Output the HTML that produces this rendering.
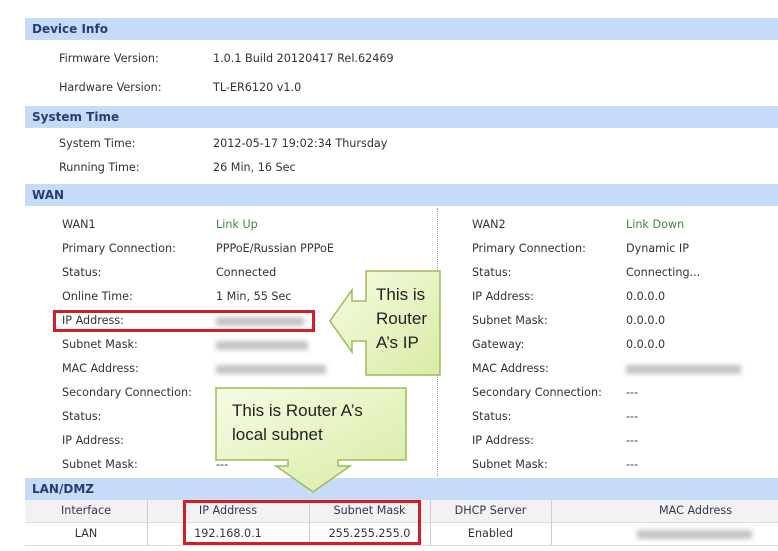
<!DOCTYPE html><html><head><style>
body{margin:0;width:778px;height:551px;background:#fff;position:relative;overflow:hidden;font-family:"DejaVu Sans","Liberation Sans",sans-serif;font-size:11.2px;color:#333}
.b{position:absolute;left:25px;width:753px;height:22px;background:#c6dbf7}
.b span{position:absolute;left:7px;top:4px;font-weight:bold;color:#243e73;font-size:12px}
.t{position:absolute;white-space:nowrap;line-height:14px}
.g{color:#3c8a3c}
.bl{position:absolute;height:9px;background:#c4c4c4;filter:blur(2.5px)}
.rb{position:absolute;border:3px solid #d21f26}
</style></head><body>
<div class="b" style="top:18px"><span>Device Info</span></div>
<div class="t" style="left:59px;top:52px">Firmware Version:</div><div class="t" style="left:213px;top:52px">1.0.1 Build 20120417 Rel.62469</div>
<div class="t" style="left:59px;top:81px">Hardware Version:</div><div class="t" style="left:213px;top:81px">TL-ER6120 v1.0</div>
<div class="b" style="top:106px"><span>System Time</span></div>
<div class="t" style="left:59px;top:137px">System Time:</div><div class="t" style="left:213px;top:137px">2012-05-17 19:02:34 Thursday</div>
<div class="t" style="left:59px;top:161px">Running Time:</div><div class="t" style="left:213px;top:161px">26 Min, 16 Sec</div>
<div class="b" style="top:184px"><span>WAN</span></div>
<div style="position:absolute;left:437px;top:208px;height:268px;border-left:1px dotted #999"></div>

<div class="t" style="left:62px;top:218px">WAN1</div><div class="t g" style="left:216px;top:218px">Link Up</div>
<div class="t" style="left:62px;top:242px">Primary Connection:</div><div class="t" style="left:216px;top:242px">PPPoE/Russian PPPoE</div>
<div class="t" style="left:62px;top:266px">Status:</div><div class="t" style="left:216px;top:266px">Connected</div>
<div class="t" style="left:62px;top:290px">Online Time:</div><div class="t" style="left:216px;top:290px">1 Min, 55 Sec</div>
<div class="t" style="left:62px;top:314px">IP Address:</div><div class="bl" style="left:216px;top:317px;width:88px"></div>
<div class="t" style="left:62px;top:338px">Subnet Mask:</div><div class="bl" style="left:216px;top:341px;width:92px"></div>
<div class="t" style="left:62px;top:362px">MAC Address:</div><div class="bl" style="left:216px;top:365px;width:110px"></div>
<div class="t" style="left:62px;top:386px">Secondary Connection:</div>
<div class="t" style="left:62px;top:410px">Status:</div>
<div class="t" style="left:62px;top:434px">IP Address:</div>
<div class="t" style="left:62px;top:458px">Subnet Mask:</div><div class="t" style="left:216px;top:458px">---</div>

<div class="t" style="left:472px;top:218px">WAN2</div><div class="t g" style="left:626px;top:218px">Link Down</div>
<div class="t" style="left:472px;top:242px">Primary Connection:</div><div class="t" style="left:626px;top:242px">Dynamic IP</div>
<div class="t" style="left:472px;top:266px">Status:</div><div class="t" style="left:626px;top:266px">Connecting...</div>
<div class="t" style="left:472px;top:290px">IP Address:</div><div class="t" style="left:626px;top:290px">0.0.0.0</div>
<div class="t" style="left:472px;top:314px">Subnet Mask:</div><div class="t" style="left:626px;top:314px">0.0.0.0</div>
<div class="t" style="left:472px;top:338px">Gateway:</div><div class="t" style="left:626px;top:338px">0.0.0.0</div>
<div class="t" style="left:472px;top:362px">MAC Address:</div><div class="bl" style="left:626px;top:365px;width:115px"></div>
<div class="t" style="left:472px;top:386px">Secondary Connection:</div><div class="t" style="left:626px;top:386px">---</div>
<div class="t" style="left:472px;top:410px">Status:</div><div class="t" style="left:626px;top:410px">---</div>
<div class="t" style="left:472px;top:434px">IP Address:</div><div class="t" style="left:626px;top:434px">---</div>
<div class="t" style="left:472px;top:458px">Subnet Mask:</div><div class="t" style="left:626px;top:458px">---</div>

<div class="rb" style="left:53px;top:310px;width:256px;height:16px"></div>

<div class="b" style="top:478px"><span>LAN/DMZ</span></div>
<div style="position:absolute;left:25px;top:500px;width:753px;height:22px;background:#f2f2f2;border-bottom:1px solid #ddd"></div>
<div style="position:absolute;left:25px;top:545px;width:753px;border-top:1px solid #ddd"></div>
<div style="position:absolute;left:147px;top:500px;height:45px;border-left:1px solid #ccc"></div>
<div style="position:absolute;left:309px;top:500px;height:45px;border-left:1px solid #ccc"></div>
<div style="position:absolute;left:430px;top:500px;height:45px;border-left:1px solid #ccc"></div>
<div style="position:absolute;left:551px;top:500px;height:45px;border-left:1px solid #ccc"></div>
<div class="t" style="left:25px;width:122px;text-align:center;top:504px;color:#335">Interface</div>
<div class="t" style="left:147px;width:162px;text-align:center;top:504px;color:#335">IP Address</div>
<div class="t" style="left:309px;width:121px;text-align:center;top:504px;color:#335">Subnet Mask</div>
<div class="t" style="left:430px;width:121px;text-align:center;top:504px;color:#335">DHCP Server</div>
<div class="t" style="left:659px;top:504px;color:#335">MAC Address</div>
<div class="t" style="left:25px;width:122px;text-align:center;top:527px">LAN</div>
<div class="t" style="left:147px;width:162px;text-align:center;top:527px">192.168.0.1</div>
<div class="t" style="left:309px;width:121px;text-align:center;top:527px">255.255.255.0</div>
<div class="t" style="left:430px;width:121px;text-align:center;top:527px">Enabled</div>
<div class="bl" style="left:637px;top:530px;width:115px"></div>
<div class="rb" style="left:183px;top:500px;width:232px;height:39px"></div>

<svg style="position:absolute;left:0;top:0" width="778" height="551">
<defs><linearGradient id="gg" x1="0" y1="0" x2="1" y2="1"><stop offset="0" stop-color="#f6fbe4"/><stop offset="1" stop-color="#d8eca4"/></linearGradient></defs>
<path d="M366 271H440V375H366V341H352V352L330 321L352 290V301H366Z" fill="url(#gg)" stroke="#9bbb59" stroke-width="1.5"/>
<path d="M216 388H406V460H338V466H350L313 492L276 466H288V460H216Z" fill="url(#gg)" stroke="#9bbb59" stroke-width="1.5"/>
<g font-family="Liberation Sans,sans-serif" font-size="17" fill="#222">
<text x="376" y="300">This is</text><text x="376" y="324">Router</text><text x="376" y="348">A’s IP</text>
<text x="232" y="416">This is Router A’s</text><text x="232" y="440">local subnet</text></g>
</svg>
</body></html>
